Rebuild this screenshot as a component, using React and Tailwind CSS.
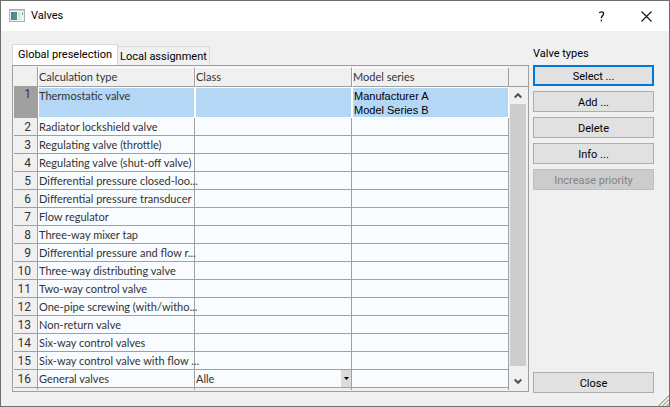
import { useState } from "react";
import clsx from "clsx";

const rows = [
  { type: "Thermostatic valve", models: ["Manufacturer A", "Model Series B"] },
  { type: "Radiator lockshield valve" },
  { type: "Regulating valve (throttle)" },
  { type: "Regulating valve (shut-off valve)" },
  { type: "Differential pressure closed-loo..." },
  { type: "Differential pressure transducer" },
  { type: "Flow regulator" },
  { type: "Three-way mixer tap" },
  { type: "Differential pressure and flow r..." },
  { type: "Three-way distributing valve" },
  { type: "Two-way control valve" },
  { type: "One-pipe screwing (with/witho..." },
  { type: "Non-return valve" },
  { type: "Six-way control valves" },
  { type: "Six-way control valve with flow ..." },
  { type: "General valves", classes: ["Alle"] }
];

const columns = ["Calculation type", "Class", "Model series"];
const tabs = ["Global preselection", "Local assignment"];

function DialogButton({ primary, disabled, children }) {
  return (
    <button
      type="button"
      disabled={disabled}
      className={clsx(
        "flex h-[21px] w-full items-center justify-center pt-0.5 leading-4",
        primary && "border-2 border-[#0078d7] bg-[#e1e1e1]",
        disabled && "border border-[#bfbfbf] bg-[#cccccc] text-[#838383]",
        !primary && !disabled && "border border-[#adadad] bg-[#e1e1e1]"
      )}
    >
      {children}
    </button>
  );
}

function TitleBar() {
  return (
    <header className="flex h-[30px] items-center bg-white pr-[17px] pl-2">
      <svg width="16" height="14" viewBox="0 0 16 14" aria-hidden="true">
        <rect x="0.5" y="0.5" width="15" height="12" fill="#f1f3f4" stroke="#a9b0b5" />
        <path d="M1 1.5h14" stroke="#c9ced2" />
        <rect x="2" y="3" width="6" height="8" fill="#4f9382" />
        <rect x="2" y="3" width="2" height="8" fill="#4a7f9c" />
        <rect x="9" y="3" width="3" height="8" fill="#dde4e8" />
        <rect x="13" y="3" width="1" height="3" fill="#6fae86" />
      </svg>
      <h1 className="ml-1.5 flex-1 leading-4">Valves</h1>
      <button type="button" aria-label="Help" className="flex h-6 w-8 items-center justify-center">
        <svg width="7" height="11" viewBox="0 0 7 11" fill="none" stroke="#111" strokeWidth="1.3" aria-hidden="true">
          <path d="M1.2 2C1.700 1.200 2.500 0.8 3.400 0.8c1.400 0 2.200 0.8 2.200 1.900C5.600 4.400 3.300 4.700 3.300 7.200M3.300 8.800v1.500" />
        </svg>
      </button>
      <button type="button" aria-label="Close" className="ml-6 flex h-6 w-[11px] items-center justify-center">
        <svg width="11" height="11" viewBox="0 0 11 11" fill="none" stroke="#111" strokeWidth="1.1" aria-hidden="true">
          <path d="M0.500 0.500l10 10M10.500 0.500l-10 10" />
        </svg>
      </button>
    </header>
  );
}

function ValveTable({ selected, onSelect }) {
  return (
    <table className="w-full table-fixed border-separate border-spacing-0 font-['Lato','Liberation_Sans',sans-serif] text-[11px] leading-[14px] text-[#333333]">
      <colgroup>
        <col className="w-6" />
        <col />
        <col />
        <col />
      </colgroup>
      <thead>
        <tr className="h-5">
          <th className="border-r border-b border-[#a0a0a0] p-0" aria-label="Row" />
          {columns.map((column) => (
            <th
              key={column}
              scope="col"
              className="border-t border-r border-b border-l border-t-white border-r-[#a0a0a0] border-b-[#a0a0a0] border-l-white p-0 text-left font-normal"
            >
              {column}
            </th>
          ))}
        </tr>
      </thead>
      <tbody>
        {rows.map((row, index) => {
          const active = index === selected;
          const cell = clsx(
            "border-r border-b p-0 pt-px whitespace-nowrap",
            active ? "border border-white bg-[#b3d7f5] align-top" : "border-[#a0a0a0] bg-[#f8fcff] pl-px"
          );
          return (
            <tr key={row.type} className={row.models ? "h-[31px]" : "h-[18px]"} onClick={() => onSelect(index)}>
              <th
                scope="row"
                className={clsx(
                  "border-r border-b border-[#a0a0a0] p-0 pr-1.5 text-right font-['Roboto','Liberation_Sans',sans-serif] text-[12px] font-normal",
                  active ? "bg-[#a0a0a0] align-top" : "pt-px"
                )}
              >
                {index + 1}
              </th>
              <td className={cell}>{row.type}</td>
              <td className={clsx(cell, row.classes && "pt-0!")}>
                {row.classes && (
                  <div className="relative">
                    <select aria-label={`Class of ${row.type}`} className="block h-[17px] w-full appearance-none">
                      {row.classes.map((name) => (
                        <option key={name}>{name}</option>
                      ))}
                    </select>
                    <span className="pointer-events-none absolute inset-y-0 right-0 flex w-2.5 items-center justify-center bg-[#dcdcdc]">
                      <svg width="5" height="3" viewBox="0 0 5 3" aria-hidden="true">
                        <path d="M0 0h5L2.500 3z" fill="#000" />
                      </svg>
                    </span>
                  </div>
                )}
              </td>
              <td className={cell}>
                {row.models?.map((model) => (
                  <div key={model} className="pl-px font-['Liberation_Sans',sans-serif] text-black">
                    {model}
                  </div>
                ))}
              </td>
            </tr>
          );
        })}
        <tr className="h-0.5" aria-hidden="true">
          <td className="border-r border-[#a0a0a0] p-0" />
          <td className="border-r border-[#a0a0a0] p-0" />
          <td className="border-r border-[#a0a0a0] p-0" />
          <td className="border-r border-[#a0a0a0] p-0" />
        </tr>
      </tbody>
    </table>
  );
}

function ScrollBar() {
  return (
    <div className="flex w-[19px] flex-col">
      <div className="h-5 border-b border-[#a0a0a0]" />
      <div className="mr-0.5 ml-px flex flex-1 flex-col">
        <button type="button" aria-label="Scroll up" className="flex h-[17px] items-center justify-center">
          <svg width="8" height="7" viewBox="0 0 8 7" fill="none" stroke="#505050" strokeWidth="2" aria-hidden="true">
            <path d="M0.700 5.500L4 2.200l3.300 3.300" />
          </svg>
        </button>
        <div className="flex-1 bg-[#cdcdcd]" />
        <button type="button" aria-label="Scroll down" className="flex h-6 items-center justify-center pt-1.5">
          <svg width="8" height="7" viewBox="0 0 8 7" fill="none" stroke="#505050" strokeWidth="2" aria-hidden="true">
            <path d="M0.700 1.500L4 4.800l3.300-3.300" />
          </svg>
        </button>
      </div>
    </div>
  );
}

export default function App() {
  const [tab, setTab] = useState(0);
  const [selected, setSelected] = useState(0);

  return (
    <div className="relative flex min-h-screen flex-col border border-[#6e6e6e] bg-[#f0f0f0] font-['Roboto','Noto_Sans',sans-serif] text-[11px] text-black">
      <TitleBar />
      <main className="flex flex-1 gap-1 pt-[13px] pr-[15px] pb-[13px] pl-[11px]">
        <section className="min-w-0 flex-1">
          <div role="tablist" className="flex h-[21px] items-end">
            {tabs.map((label, index) => (
              <button
                key={label}
                type="button"
                role="tab"
                aria-selected={tab === index}
                onClick={() => setTab(index)}
                className={clsx(
                  "border-t border-r border-[#d9d9d9] leading-4",
                  tab === index ? "h-[21px] border-l bg-white px-[5px] pb-px" : "h-[19px] px-0.5 pt-px"
                )}
              >
                {label}
              </button>
            ))}
          </div>
          <div className="flex border border-[#a0a0a0] py-px pl-px">
            <div className="min-w-0 flex-1">
              <ValveTable selected={selected} onSelect={setSelected} />
            </div>
            <ScrollBar />
          </div>
        </section>
        <aside className="flex w-[121px] flex-col gap-[5px]">
          <h2 className="h-4 leading-5">Valve types</h2>
          <DialogButton primary>Select ...</DialogButton>
          <DialogButton>Add ...</DialogButton>
          <DialogButton>Delete</DialogButton>
          <DialogButton>Info ...</DialogButton>
          <DialogButton disabled>Increase priority</DialogButton>
          <div className="mt-auto flex">
            <DialogButton>Close</DialogButton>
          </div>
        </aside>
      </main>
      <svg className="absolute right-0 bottom-0" width="12" height="12" viewBox="0 0 12 12" strokeWidth="1.3" aria-hidden="true">
        <path d="M0 12L12 0M4 12l8-8M8 12l4-4" stroke="#fff" />
        <path d="M1.500 12L12 1.500M5.500 12L12 5.500M9.500 12L12 9.500" stroke="#a8a899" />
      </svg>
    </div>
  );
}
